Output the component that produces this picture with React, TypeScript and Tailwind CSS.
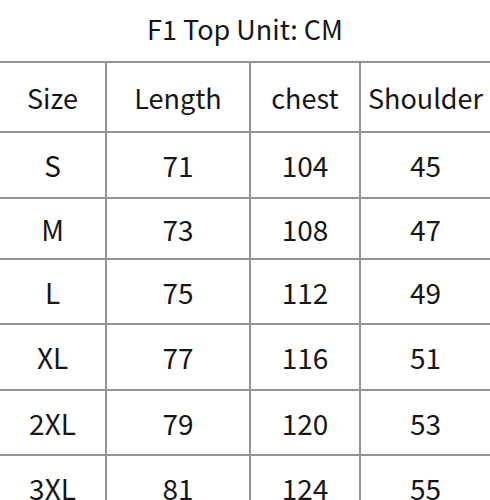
const rows = [
  { size: 'S', length: 71, chest: 104, shoulder: 45, h: 'h-[66px]' },
  { size: 'M', length: 73, chest: 108, shoulder: 47, h: 'h-[61px]' },
  { size: 'L', length: 75, chest: 112, shoulder: 49, h: 'h-[65px]' },
  { size: 'XL', length: 77, chest: 116, shoulder: 51, h: 'h-[66px]' },
  { size: '2XL', length: 79, chest: 120, shoulder: 53, h: 'h-[65px]' },
  { size: '3XL', length: 81, chest: 124, shoulder: 55, h: 'h-[65px]' },
];

export default function App() {
  return (
    <div
      className="w-[490px] h-[500px] overflow-hidden bg-white text-[#161616]"
      style={{ fontFamily: '"Noto Sans CJK JP", "Liberation Sans", sans-serif' }}
    >
      <div className="h-[61px] flex items-center justify-center text-[27px] leading-none pb-1">
        F1 Top Unit: CM
      </div>
      <div className="border-t-2 border-[#939393]">
        <div className="grid grid-cols-[107px_144px_110px_1fr] h-[68px] text-[27px] leading-none">
          <div className="flex items-center justify-center border-r-2 border-[#939393]">Size</div>
          <div className="flex items-center justify-center border-r-2 border-[#939393]">Length</div>
          <div className="flex items-center justify-center border-r-2 border-[#939393]">chest</div>
          <div className="flex items-center justify-center">Shoulder</div>
        </div>
        {rows.map((r) => (
          <div
            key={r.size}
            className={`grid grid-cols-[107px_144px_110px_1fr] border-t-2 border-[#939393] text-[28px] leading-none ${r.h}`}
          >
            <div className="flex items-center justify-center border-r-2 border-[#939393]">{r.size}</div>
            <div className="flex items-center justify-center border-r-2 border-[#939393]">{r.length}</div>
            <div className="flex items-center justify-center border-r-2 border-[#939393]">{r.chest}</div>
            <div className="flex items-center justify-center">{r.shoulder}</div>
          </div>
        ))}
      </div>
    </div>
  );
}
